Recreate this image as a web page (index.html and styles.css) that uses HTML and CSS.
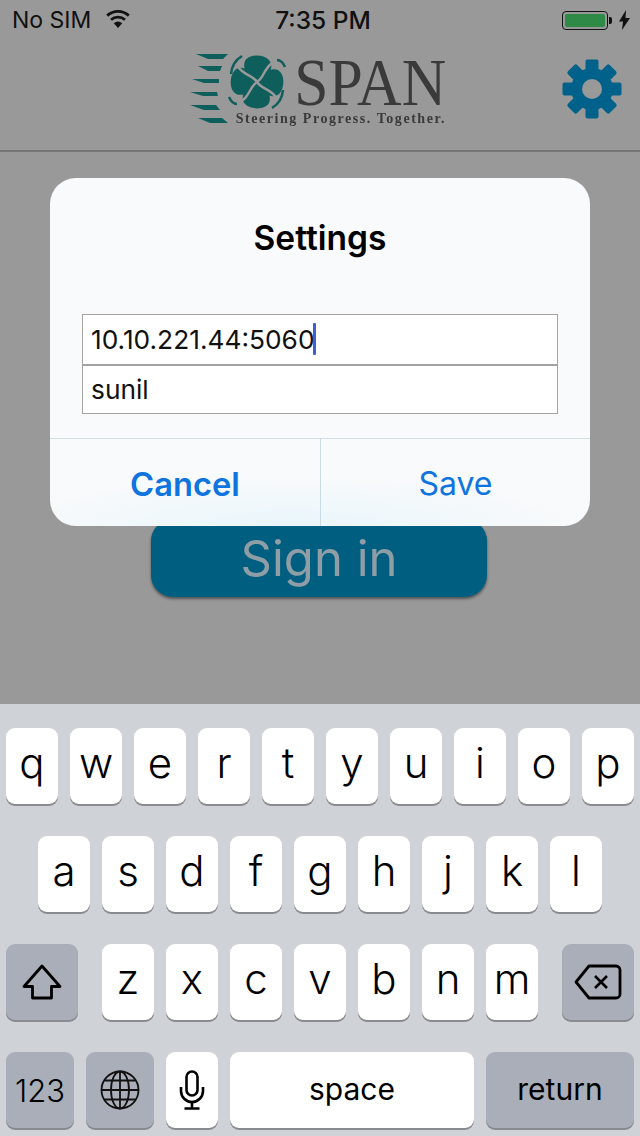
FILE: index.html
```html
<!DOCTYPE html>
<html lang="en">
<head>
    <meta charset="UTF-8">
    <meta name="viewport" content="width=device-width, initial-scale=1.0">
    <title>Settings</title>
    <link rel="stylesheet" href="styles.css">
</head>
<body>
    <div class="screen">
        <div class="status-bar">
            <div class="status-left">
                <span>No SIM</span>
                <svg class="wifi" viewBox="0 0 24 18" width="24" height="18">
                    <path d="M12 18L7.800 13.200a6.500 6.500 0 0 1 8.400 0z" fill="#111"/>
                    <path d="M5 9.800a10.500 10.500 0 0 1 14 0" fill="none" stroke="#111" stroke-width="2.800"/>
                    <path d="M1.200 5.600a16 16 0 0 1 21.600 0" fill="none" stroke="#111" stroke-width="2.800"/>
                </svg>
            </div>
            <div class="status-time">7:35 PM</div>
            <div class="status-right">
                <div class="battery"><div class="battery-level"></div></div>
                <div class="battery-nub"></div>
                <svg class="bolt" viewBox="0 0 11 20" width="11" height="20">
                    <path d="M7 0L0 11.500h4L3 20l8-12H6.500z" fill="#111"/>
                </svg>
            </div>
        </div>

        <header class="top-bar">
            <div class="logo">
                <svg class="logo-mark" viewBox="190 50 100 80" width="100" height="80">
                    <g fill="#0e5f5c">
                        <path d="M196 54h32l-5 5h-15z"/>
                        <path d="M198 66h24l-2 5h-12z"/>
                        <path d="M192 79h27v4h-15z"/>
                        <path d="M190 92h27l1 4h-15z"/>
                        <path d="M190 105h26l4 5h-16z"/>
                        <path d="M198 118h24l6 5h-18z"/>
                    </g>
                    <g transform="translate(257 82)">
                        <g fill="#0e5f5c">
                            <path id="petal" d="M0-1C-10-5-15-14-12-21-8-28 6-28 12-22 18-15 12-5 0-1z"/>
                            <use href="#petal" transform="rotate(90)"/>
                            <use href="#petal" transform="rotate(180)"/>
                            <use href="#petal" transform="rotate(270)"/>
                        </g>
                        <g fill="none" stroke="#999" stroke-width="2.500">
                            <path id="swirl" d="M0 0C-5-8-15-6-23-21"/>
                            <use href="#swirl" transform="rotate(90)"/>
                            <use href="#swirl" transform="rotate(180)"/>
                            <use href="#swirl" transform="rotate(270)"/>
                        </g>
                        <path d="M20-22Q25-22 28-15M-20 22Q-25 22-28 15M-15-26Q-25-20-26-8M15 26Q25 20 26 8" fill="none" stroke="#0e5f5c" stroke-width="2.500"/>
                    </g>
                </svg>
                <div class="logo-text">
                    <span class="logo-name">SPAN</span>
                    <span class="logo-tag">Steering Progress. Together.</span>
                </div>
            </div>
            <svg class="gear" viewBox="-32 -32 64 64" width="64" height="64">
                <g fill="#00628a">
                    <circle r="21"/>
                    <rect x="-6.500" y="-29.500" width="13" height="59" rx="2"/>
                    <rect x="-6.500" y="-29.500" width="13" height="59" rx="2" transform="rotate(45)"/>
                    <rect x="-6.500" y="-29.500" width="13" height="59" rx="2" transform="rotate(90)"/>
                    <rect x="-6.500" y="-29.500" width="13" height="59" rx="2" transform="rotate(135)"/>
                </g>
                <circle r="10" fill="#999"/>
            </svg>
        </header>

        <div class="sign-in-wrap">
            <div class="sign-in">Sign in</div>
        </div>

        <div class="dialog">
            <h2 class="dialog-title">Settings</h2>
            <div class="fields">
                <div class="field">10.10.221.44:5060<span class="caret"></span></div>
                <div class="field">sunil</div>
            </div>
            <div class="dialog-actions">
                <div class="action action-bold">Cancel</div>
                <div class="action">Save</div>
            </div>
        </div>
    </div>

    <div class="keyboard">
        <div class="key-row">
            <div class="key">q</div>
            <div class="key">w</div>
            <div class="key">e</div>
            <div class="key">r</div>
            <div class="key">t</div>
            <div class="key">y</div>
            <div class="key">u</div>
            <div class="key">i</div>
            <div class="key">o</div>
            <div class="key">p</div>
        </div>
        <div class="key-row key-row-center">
            <div class="key">a</div>
            <div class="key">s</div>
            <div class="key">d</div>
            <div class="key">f</div>
            <div class="key">g</div>
            <div class="key">h</div>
            <div class="key">j</div>
            <div class="key">k</div>
            <div class="key">l</div>
        </div>
        <div class="key-row key-row-split">
            <div class="key key-dark key-wide key-icon">
                <svg viewBox="0 0 40 36" width="40" height="36">
                    <path d="M20 2L38 22.500H29.500V34H10.500V22.500H2z" fill="none" stroke="#000" stroke-width="2.800" stroke-linejoin="round"/>
                </svg>
            </div>
            <div class="key-group">
                <div class="key">z</div>
                <div class="key">x</div>
                <div class="key">c</div>
                <div class="key">v</div>
                <div class="key">b</div>
                <div class="key">n</div>
                <div class="key">m</div>
            </div>
            <div class="key key-dark key-wide key-icon">
                <svg viewBox="0 0 48 36" width="48" height="36">
                    <path d="M15 2H42a4 4 0 0 1 4 4V30a4 4 0 0 1-4 4H15L2 18z" fill="none" stroke="#000" stroke-width="2.800" stroke-linejoin="round"/>
                    <path d="M21 12L33 24M33 12L21 24" stroke="#000" stroke-width="2.600"/>
                </svg>
            </div>
        </div>
        <div class="key-row">
            <div class="key key-dark key-mode key-icon">123</div>
            <div class="key key-dark key-mode key-icon">
                <svg viewBox="0 0 40 40" width="40" height="40" fill="none" stroke="#111" stroke-width="1.800">
                    <circle cx="20" cy="20" r="18.500"/>
                    <ellipse cx="20" cy="20" rx="9" ry="18.500"/>
                    <path d="M20 1.500V38.500M1.500 20H38.500M4.500 10.500H35.500M4.500 29.500H35.500"/>
                </svg>
            </div>
            <div class="key key-icon">
                <svg viewBox="0 0 26 40" width="26" height="40" fill="none" stroke="#000" stroke-width="2.600">
                    <rect x="7.500" y="1.500" width="11" height="24" rx="5.500"/>
                    <path d="M2 17v4a11 11 0 0 0 22 0v-4M13 32v6M5.500 38.500H20.500"/>
                </svg>
            </div>
            <div class="key key-space">space</div>
            <div class="key key-dark key-return">return</div>
        </div>
    </div>
</body>
</html>
```

FILE: styles.css
```css
* {
    box-sizing: border-box;
}

body {
    font-family: Inter, 'Noto Sans', sans-serif;
    margin: 0;
    width: 640px;
    height: 1136px;
    overflow: hidden;
    background-color: #cfd2d7;
}

.screen {
    position: relative;
    height: 704px;
    background-color: #999;
}

/* status bar */
.status-bar {
    display: grid;
    grid-template-columns: 1fr auto 1fr;
    align-items: center;
    height: 40px;
    padding: 0 10px 0 12px;
    color: #111;
    font-size: 23px;
}

.status-left {
    display: flex;
    align-items: center;
    gap: 15px;
}

.wifi {
    margin-top: -2px;
}

.status-time {
    margin-left: 4px;
    font-size: 24.5px;
    font-weight: 500;
}

.status-right {
    display: flex;
    align-items: center;
    justify-content: flex-end;
}

.battery {
    width: 46px;
    height: 19px;
    padding: 2px;
    border: 1px solid #111;
    border-radius: 4px;
}

.battery-level {
    height: 100%;
    background-color: #2f8a47;
    border-radius: 2px;
}

.battery-nub {
    width: 3px;
    height: 7px;
    margin-left: 1px;
    background-color: #111;
    border-radius: 0 2px 2px 0;
}

.bolt {
    margin-left: 7px;
}

/* top bar */
.top-bar {
    display: grid;
    grid-template-columns: 1fr 260px 1fr;
    height: 112px;
    padding-top: 10px;
    border-bottom: 2px solid #777;
}

.logo {
    grid-column: 2;
    display: grid;
    height: 80px;
    filter: blur(0.6px);
}

.logo-mark,
.logo-text {
    grid-area: 1 / 1;
}

.logo-text {
    display: flex;
    flex-direction: column;
    align-items: flex-end;
    padding: 9px 4px 0 0;
    color: #3a3a3a;
    font-family: 'Liberation Serif', serif;
}

.logo-name {
    height: 47px;
    font-size: 67px;
    line-height: 47px;
    transform: scaleX(0.92);
    transform-origin: right center;
}

.logo-tag {
    margin-top: 6px;
    font-size: 14px;
    font-weight: bold;
    letter-spacing: 1.55px;
    line-height: 14px;
}

.gear {
    grid-column: 3;
    justify-self: end;
    margin: 7px 16px 0 0;
}

/* sign in */
.sign-in-wrap {
    display: flex;
    justify-content: center;
    padding: 367px 2px 0 0;
}

.sign-in {
    display: flex;
    align-items: center;
    justify-content: center;
    width: 336px;
    height: 78px;
    background-color: #005f80;
    border-radius: 22px;
    box-shadow: 0 2px 3px rgba(0, 0, 0, 0.45);
    color: #8f9ea6;
    font-size: 49px;
}

/* dialog */
.dialog {
    position: absolute;
    top: 178px;
    left: 50px;
    width: 540px;
    height: 348px;
    background-color: #f9fafb;
    border-radius: 26px;
}

.dialog-title {
    height: 136px;
    margin: 0;
    padding-top: 39px;
    color: #000;
    font-size: 33.5px;
    font-weight: 600;
    line-height: 42px;
    text-align: center;
}

.fields {
    margin: 0 32px 24px;
    background-color: #fff;
    border: 1px solid #a3a3a3;
}

.field {
    display: flex;
    align-items: center;
    height: 49px;
    padding: 0 8px 1px;
    color: #111;
    font-size: 26.3px;
}

.field + .field {
    border-top: 2px solid #a3a3a3;
}

.caret {
    width: 3px;
    height: 32px;
    margin-left: -2px;
    background-color: #3f5fd0;
    border-radius: 1px;
}

.dialog-actions {
    display: grid;
    grid-template-columns: 1fr 1fr;
    height: 88px;
    border-top: 1px solid #d5dce0;
    border-radius: 0 0 26px 26px;
    background: radial-gradient(ellipse 55% 60% at 45% 100%, #e9f6fb, rgba(249, 250, 251, 0));
}

.action {
    display: flex;
    align-items: center;
    justify-content: center;
    padding-top: 2px;
    color: #0f74e0;
    font-size: 32px;
}

.action + .action {
    border-left: 1px solid #c9dbe3;
}

.action-bold {
    font-size: 32.7px;
    font-weight: 600;
}

/* keyboard */
.keyboard {
    display: flex;
    flex-direction: column;
    gap: 32px;
    height: 432px;
    padding: 24px 6px 8px;
    background-color: #cfd2d7;
}

.key-row {
    display: flex;
    gap: 12px;
}

.key-row-center {
    justify-content: center;
}

.key-row-split {
    justify-content: space-between;
}

.key-group {
    display: flex;
    gap: 12px;
}

.key {
    display: flex;
    align-items: center;
    justify-content: center;
    width: 52px;
    height: 76px;
    padding-bottom: 7px;
    background-color: #fff;
    border-radius: 9px;
    box-shadow: 0 2px 0 #888c92;
    color: #000;
    font-size: 42px;
    font-weight: 350;
}

.key-icon {
    padding-bottom: 0;
}

.key-dark {
    background-color: #a9aeb8;
}

.key-wide {
    width: 72px;
}

.key-mode {
    width: 68px;
    font-size: 31px;
}

.key-space {
    width: 244px;
    padding-bottom: 2px;
    font-size: 30px;
    font-weight: 400;
}

.key-return {
    width: 148px;
    padding-bottom: 2px;
    font-size: 30px;
    font-weight: 400;
}
```
